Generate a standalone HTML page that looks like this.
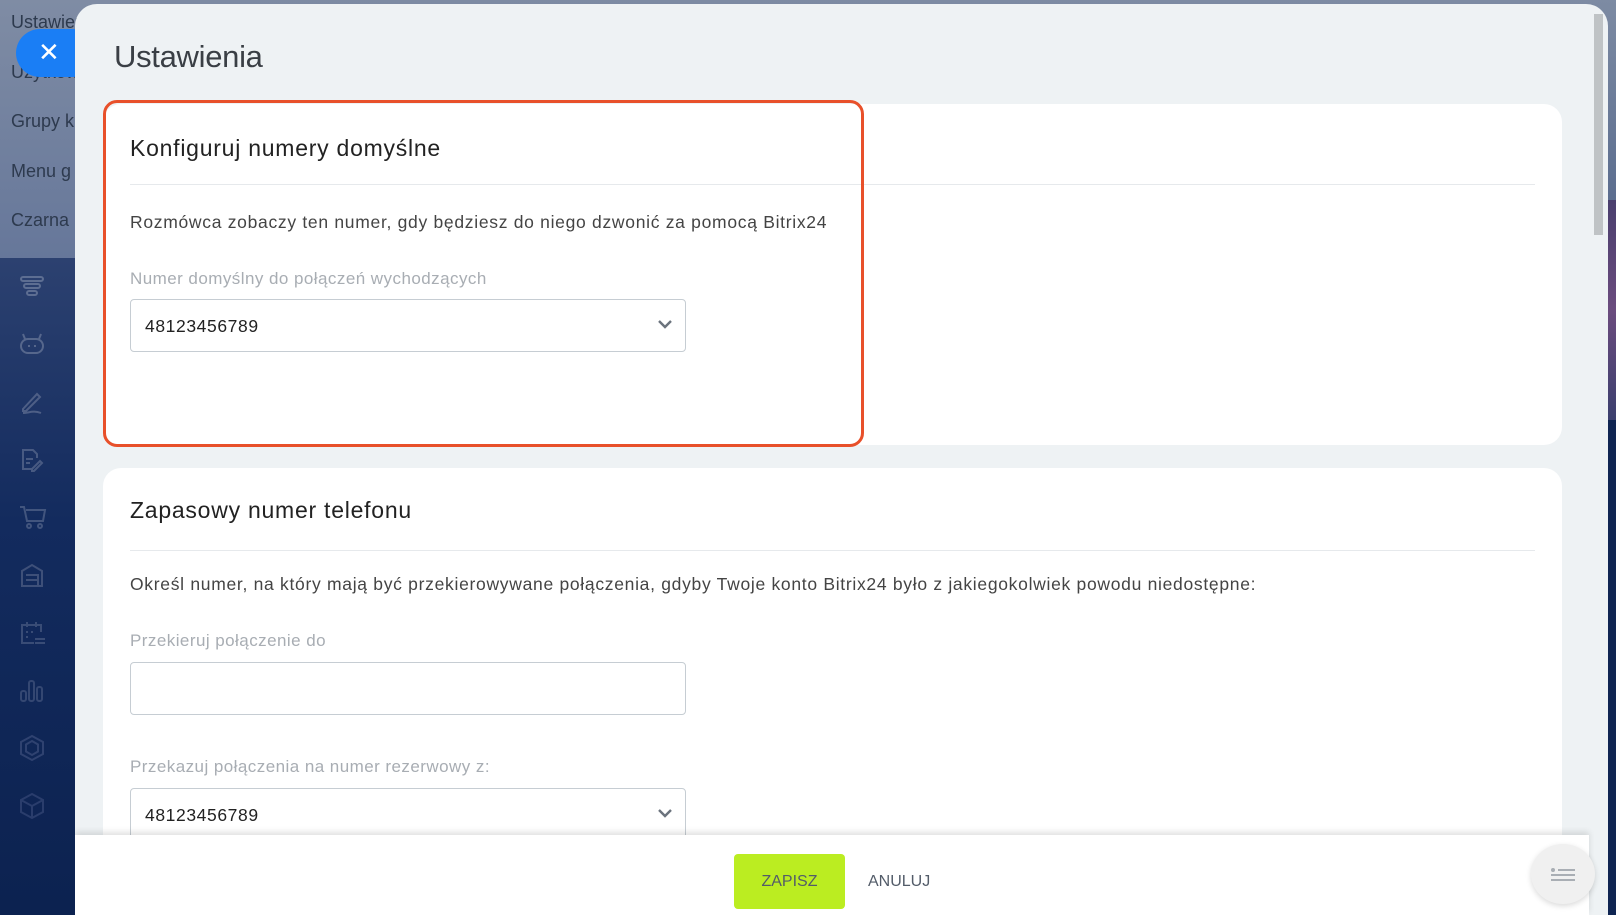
<!DOCTYPE html>
<html><head><meta charset="utf-8">
<style>
*{margin:0;padding:0;box-sizing:border-box}
body{width:1616px;height:915px;overflow:hidden;position:relative;font-family:"Liberation Sans",sans-serif;background:#0f2552}
.bgtop{position:absolute;left:0;top:0;width:1616px;height:210px;background:linear-gradient(#7d8ba3,#5a6c8e)}
.bgright{position:absolute;left:1600px;top:200px;width:16px;height:220px;background:linear-gradient(#4a3f6e,#6b4c7e,#3b3f6e)}
.menu{position:absolute;left:0;top:0;width:110px;height:258px;background:linear-gradient(#7f8ca4,#66779a);border-radius:0 0 18px 0}
.menu div{position:absolute;left:11px;font-size:18px;color:#2d3a4e}
.side{position:absolute;left:0;top:258px;width:76px;height:657px;background:linear-gradient(#2c4170,#132b5e 40%,#0c2250)}
.side svg{position:absolute;left:19px}
.close{position:absolute;left:16px;top:29px;width:80px;height:48px;border-radius:24px;background:#1a7ef5}
.close span{position:absolute;left:22px;top:8px;color:#fff;font-size:26px;line-height:30px}
.panel{position:absolute;left:75px;top:4px;width:1533px;height:911px;background:#eef2f4;border-radius:22px 22px 0 0;overflow:hidden}
.title{position:absolute;left:39px;top:35px;font-size:31px;color:#3a3f45;letter-spacing:-0.3px}
.card{position:absolute;left:28px;width:1459px;background:#fff;border-radius:18px}
.h{position:absolute;left:27px;font-size:23px;color:#222;letter-spacing:0.75px}
.div{position:absolute;left:27px;right:27px;height:1px;background:#e6e9ec}
.t{position:absolute;left:27px;font-size:17.5px;color:#444;letter-spacing:0.7px}
.l{position:absolute;left:27px;font-size:17px;color:#a8adb3;letter-spacing:0.45px}
.inp{position:absolute;left:27px;width:556px;height:53px;border:1px solid #c6cdd3;border-radius:4px;font-size:17.5px;color:#222;padding:16px 14px;letter-spacing:0.6px}
.inp svg{position:absolute;right:12px;top:19px}
.red{position:absolute;left:28px;top:96px;width:761px;height:347px;border:3px solid #e8502a;border-radius:14px}
.scroll{position:absolute;left:1519px;top:10px;width:9px;height:221px;background:#bfc3c5}
.foot{position:absolute;left:0;top:831px;width:1514px;height:80px;background:#fff;box-shadow:0 -3px 6px rgba(0,0,0,.12)}
.btn{position:absolute;left:659px;top:19px;width:111px;height:55px;background:#bbed21;border-radius:4px;font-size:16px;color:#535c69;text-align:center;line-height:55px}
.an{position:absolute;left:793px;top:19px;line-height:55px;font-size:16px;color:#535c69}
.fab{position:absolute;left:1531px;top:844px;width:64px;height:60px;border-radius:50%;background:#f0f0f0;box-shadow:0 2px 6px rgba(0,0,0,.15)}
</style></head><body>
<div class="bgtop"></div><div class="bgright"></div>
<div class="menu">
<div style="top:12px">Ustawienia</div>
<div style="top:62px">Użytkownicy</div>
<div style="top:111px">Grupy k</div>
<div style="top:161px">Menu g</div>
<div style="top:210px">Czarna</div>
</div>
<div class="side">
<svg style="top:17px" width="26" height="22" viewBox="0 0 26 22" fill="none" stroke="#5d6e92" stroke-width="2"><rect x="2" y="2" width="22" height="4" rx="2"/><rect x="5" y="9" width="16" height="4" rx="2"/><rect x="8" y="16" width="10" height="4" rx="2"/></svg>
<svg style="top:74px" width="26" height="24" viewBox="0 0 26 24" fill="none" stroke="#56678c" stroke-width="2"><rect x="2" y="7" width="22" height="14" rx="7"/><path d="M6 7L4 2M20 7l2-5"/><path d="M9 14h2M15 14h2"/></svg>
<svg style="top:131px" width="26" height="26" viewBox="0 0 26 26" fill="none" stroke="#4e5f86" stroke-width="2"><path d="M4 20L18 5l3 3L7 22H4z M4 24c6 0 10-3 18 0"/></svg>
<svg style="top:189px" width="26" height="26" viewBox="0 0 26 26" fill="none" stroke="#485a82" stroke-width="2"><path d="M14 22H4V3h10l4 4v4M7 12h7M7 16h4M13 22l8-8 2 2-8 8h-2z"/></svg>
<svg style="top:246px" width="28" height="26" viewBox="0 0 28 26" fill="none" stroke="#42557e" stroke-width="2"><path d="M1 3h4l3 14h16l2-11H7"/><circle cx="10" cy="22" r="2"/><circle cx="21" cy="22" r="2"/></svg>
<svg style="top:304px" width="26" height="26" viewBox="0 0 26 26" fill="none" stroke="#3e5079" stroke-width="2"><path d="M3 24V9l10-6 10 6v15zM7 13h12v11M7 18h12"/></svg>
<svg style="top:362px" width="28" height="26" viewBox="0 0 28 26" fill="none" stroke="#394c76" stroke-width="2"><path d="M22 12V5H3v18h12M8 2v5M17 2v5M16 19h10M16 23h10M7 12h2M12 12h2M7 17h2"/></svg>
<svg style="top:419px" width="26" height="26" viewBox="0 0 26 26" fill="none" stroke="#344772" stroke-width="2"><rect x="2" y="14" width="5" height="10" rx="2"/><rect x="10" y="4" width="5" height="20" rx="2"/><rect x="18" y="10" width="5" height="14" rx="2"/></svg>
<svg style="top:476px" width="26" height="28" viewBox="0 0 26 28" fill="none" stroke="#2f4270" stroke-width="2"><path d="M13 2l11 6v12l-11 6-11-6V8z"/><path d="M13 7l6 3.5v7L13 21l-6-3.5v-7z"/></svg>
<svg style="top:534px" width="26" height="28" viewBox="0 0 26 28" fill="none" stroke="#2a3d6c" stroke-width="2"><path d="M13 2l11 6v12l-11 6-11-6V8zM2 8l11 6 11-6M13 14v12"/></svg>
</div>
<div class="close"><span>✕</span></div>
<div class="panel">
<div class="title">Ustawienia</div>
<div class="card" style="top:100px;height:341px">
<div class="h" style="top:31px">Konfiguruj numery domyślne</div>
<div class="div" style="top:80px"></div>
<div class="t" style="top:108px">Rozmówca zobaczy ten numer, gdy będziesz do niego dzwonić za pomocą Bitrix24</div>
<div class="l" style="top:165px">Numer domyślny do połączeń wychodzących</div>
<div class="inp" style="top:195px">48123456789<svg width="16" height="10" viewBox="0 0 16 10"><path d="M2 2l6 6 6-6" fill="none" stroke="#6b737d" stroke-width="2.4"/></svg></div>
</div>
<div class="red"></div>
<div class="card" style="top:464px;height:460px">
<div class="h" style="top:29px">Zapasowy numer telefonu</div>
<div class="div" style="top:82px"></div>
<div class="t" style="top:106px">Określ numer, na który mają być przekierowywane połączenia, gdyby Twoje konto Bitrix24 było z jakiegokolwiek powodu niedostępne:</div>
<div class="l" style="top:163px">Przekieruj połączenie do</div>
<div class="inp" style="top:194px"></div>
<div class="l" style="top:289px">Przekazuj połączenia na numer rezerwowy z:</div>
<div class="inp" style="top:320px">48123456789<svg width="16" height="10" viewBox="0 0 16 10"><path d="M2 2l6 6 6-6" fill="none" stroke="#6b737d" stroke-width="2.4"/></svg></div>
</div>
<div class="scroll"></div>
<div class="foot"><div class="btn">ZAPISZ</div><div class="an">ANULUJ</div></div>
</div>
<div class="fab"><svg style="position:absolute;left:19px;top:24px" width="26" height="14" viewBox="0 0 26 14"><circle cx="3" cy="2" r="2" fill="#a9aeb4"/><path d="M8 2h17M1 7h24M1 12h24" stroke="#a9aeb4" stroke-width="2"/></svg></div>
</body></html>
